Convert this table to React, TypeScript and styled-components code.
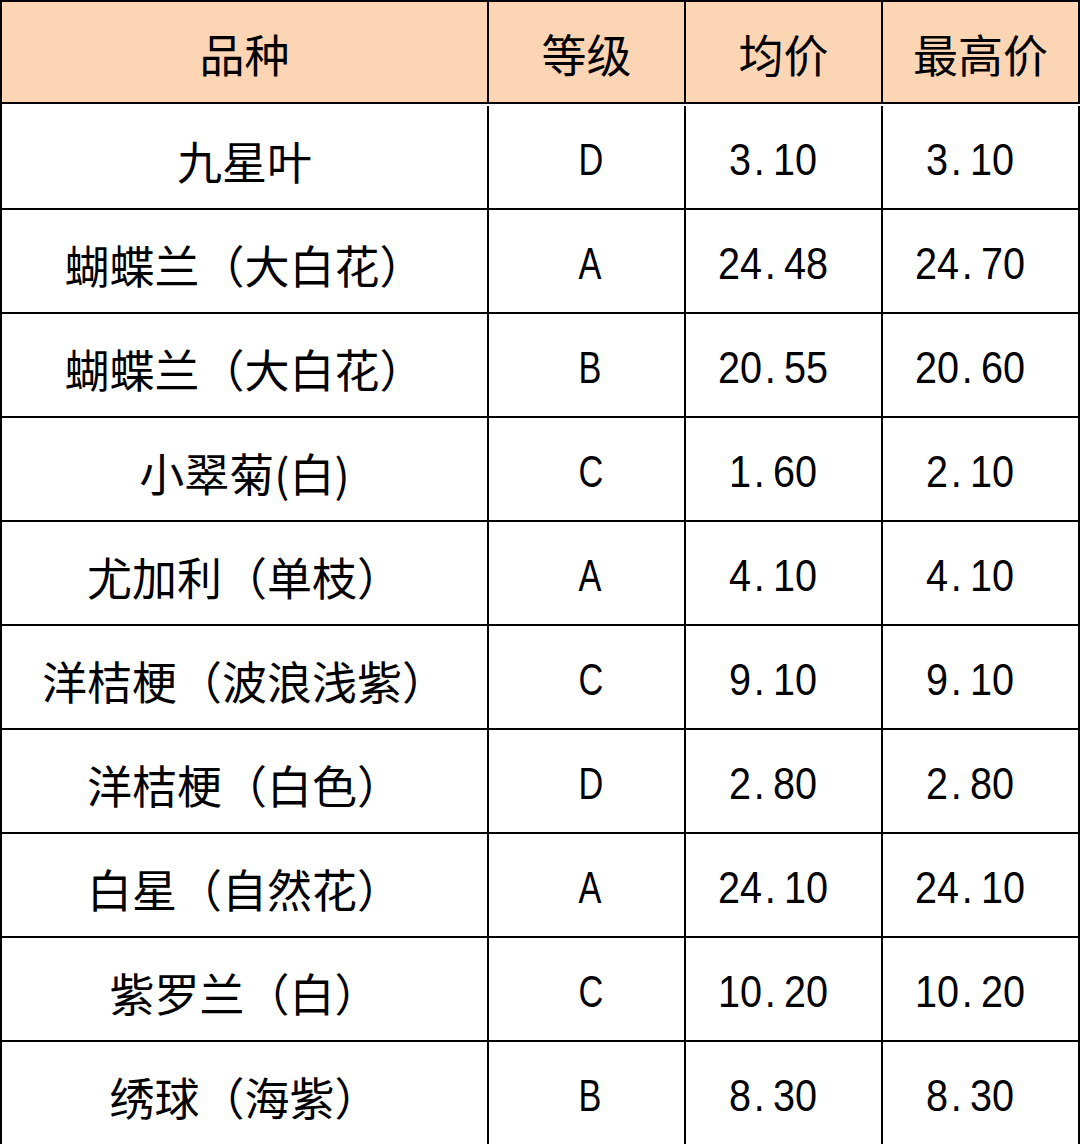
import React from 'react'
import styled, { createGlobalStyle } from 'styled-components'

const GlobalStyle = createGlobalStyle`
  html, body {
    margin: 0;
    padding: 0;
    background: #ffffff;
  }
  body {
    font-family: "Noto Sans CJK SC", "Noto Sans", sans-serif;
    color: #000;
  }
`

const Grid = styled.div`
  width: 1080px;
  display: grid;
  grid-template-columns: 487px 197px 197px 197px;
  grid-auto-rows: 104px;
  border-left: 2px solid #000;
  border-top: 2px solid #000;
  box-sizing: border-box;
`

const Cell = styled.div<{ $head?: boolean }>`
  box-sizing: border-box;
  height: ${(p) => (p.$head ? '102px' : '104px')};
  border-right: 2px solid #000;
  border-bottom: 2px solid #000;
  background: ${(p) => (p.$head ? '#fcd5b4' : '#ffffff')};
  display: flex;
  align-items: center;
  justify-content: center;
  font-size: 45px;
  line-height: 1;
  padding-top: ${(p) => (p.$head ? '2px' : '6px')};
  white-space: nowrap;
  text-spacing-trim: space-all;
  font-feature-settings: "chws" 0, "halt" 0, "palt" 0;
  font-kerning: none;
`

const Mono = styled.span<{ $trail?: boolean }>`
  display: inline-flex;
  font-family: "Liberation Sans", Arial, sans-serif;
  font-size: 44px;
  padding-right: ${(p) => (p.$trail ? '24px' : '0')};
`

const Ch = styled.span<{ $dot?: boolean; $letter?: boolean }>`
  display: inline-block;
  width: 22px;
  text-align: ${(p) => (p.$dot ? 'left' : 'center')};
  text-indent: ${(p) => (p.$dot ? '3px' : '0')};
  transform: scaleX(${(p) => (p.$letter ? 0.78 : 0.9)});
`

const NumText = ({ value }: { value: string }) => {
  const isLetter = /^[A-Z]$/.test(value)
  return (
    <Mono $trail={!isLetter}>
      {value.split('').map((c, i) => (
        <Ch key={i} $dot={c === '.'} $letter={isLetter}>
          {c}
        </Ch>
      ))}
    </Mono>
  )
}

const headers = ['品种', '等级', '均价', '最高价']

const rows: [string, string, string, string][] = [
  ['九星叶', 'D', '3.10', '3.10'],
  ['蝴蝶兰（大白花）', 'A', '24.48', '24.70'],
  ['蝴蝶兰（大白花）', 'B', '20.55', '20.60'],
  ['小翠菊(白)', 'C', '1.60', '2.10'],
  ['尤加利（单枝）', 'A', '4.10', '4.10'],
  ['洋桔梗（波浪浅紫）', 'C', '9.10', '9.10'],
  ['洋桔梗（白色）', 'D', '2.80', '2.80'],
  ['白星（自然花）', 'A', '24.10', '24.10'],
  ['紫罗兰（白）', 'C', '10.20', '10.20'],
  ['绣球（海紫）', 'B', '8.30', '8.30'],
]

export default function App() {
  return (
    <>
      <GlobalStyle />
      <Grid lang="zh-CN">
        {headers.map((h) => (
          <Cell $head key={h}>
            {h}
          </Cell>
        ))}
        {rows.map((r, i) => (
          <React.Fragment key={i}>
            <Cell>{r[0]}</Cell>
            <Cell>
              <NumText value={r[1]} />
            </Cell>
            <Cell>
              <NumText value={r[2]} />
            </Cell>
            <Cell>
              <NumText value={r[3]} />
            </Cell>
          </React.Fragment>
        ))}
      </Grid>
    </>
  )
}
